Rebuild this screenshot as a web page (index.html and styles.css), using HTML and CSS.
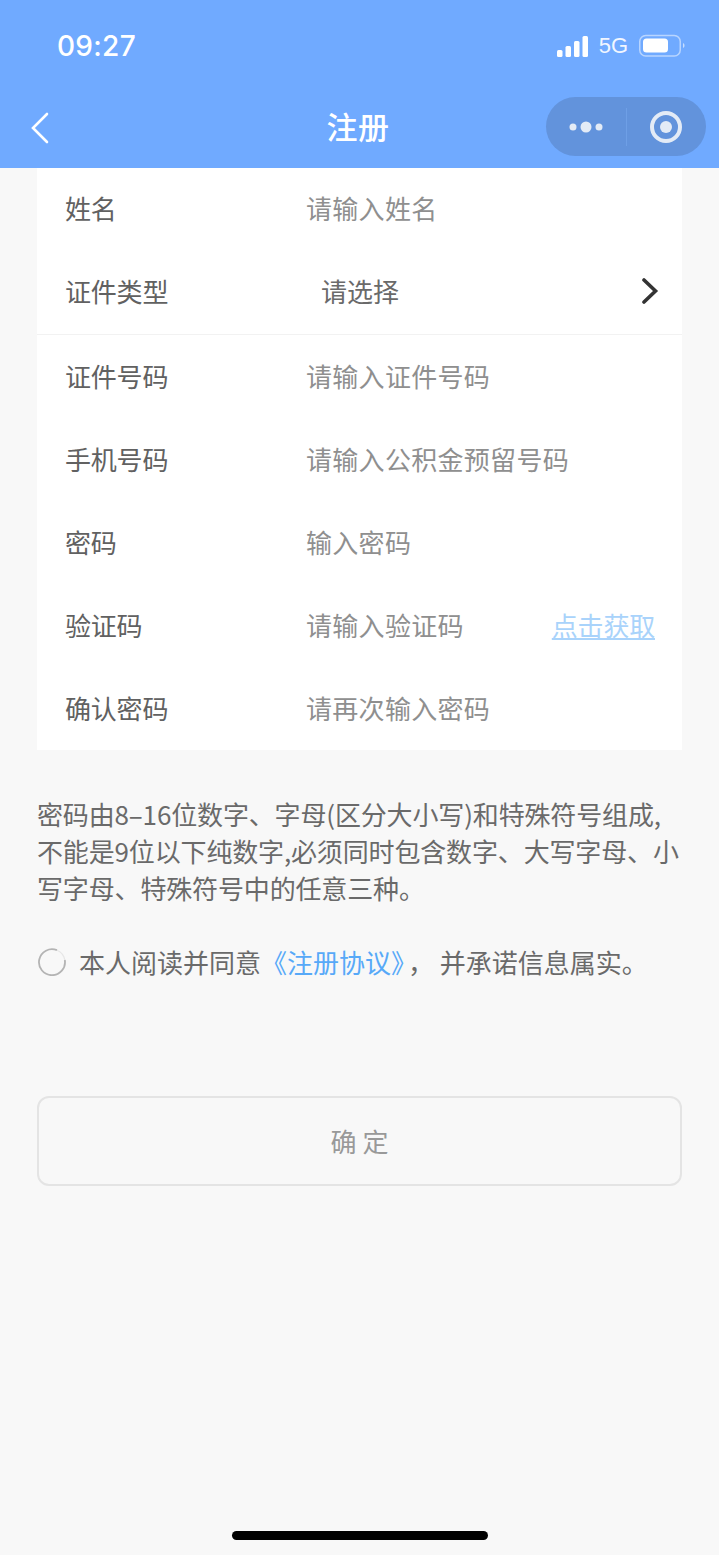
FILE: index.html
```html
<!DOCTYPE html>
<html lang="zh-CN">
<head>
    <meta charset="UTF-8">
    <meta name="viewport" content="width=device-width, initial-scale=1.0">
    <title>注册</title>
    <link rel="stylesheet" href="styles.css">
</head>
<body>
    <header class="top-bar">
        <div class="status-bar">
            <span class="time">09:27</span>
            <div class="status-right">
                <svg class="signal" width="31" height="21" viewBox="0 0 31 21"><rect x="0" y="14" width="5.500" height="7" rx="1.500"/><rect x="8.500" y="10" width="5.500" height="11" rx="1.500"/><rect x="17" y="5" width="5.500" height="16" rx="1.500"/><rect x="25.500" y="0" width="5.500" height="21" rx="1.500"/></svg>
                <span class="net">5G</span>
                <svg class="battery" width="46" height="24" viewBox="0 0 46 24"><rect x="0.750" y="1.500" width="40.500" height="20.500" rx="6" fill="none" stroke="#fff" stroke-opacity="0.5" stroke-width="1.500"/><rect x="4" y="4.500" width="25" height="14" rx="3.500" fill="#fff"/><path d="M44 9c1 .5 1.500 1.500 1.500 2.500s-.5 2-1.500 2.500z" fill="#fff" fill-opacity="0.6"/></svg>
            </div>
        </div>
        <div class="nav-bar">
            <svg class="back" width="20" height="32" viewBox="0 0 20 32"><path d="M17 2 L3 16 L17 30" fill="none" stroke="#fff" stroke-width="2.600" stroke-linecap="round"/></svg>
            <h1 class="nav-title">注册</h1>
            <div class="capsule">
                <div class="capsule-side">
                    <svg width="36" height="16" viewBox="0 0 36 16"><circle cx="5" cy="8" r="3.500"/><circle cx="18" cy="8" r="5.500"/><circle cx="31" cy="8" r="3.500"/></svg>
                </div>
                <div class="capsule-line"></div>
                <div class="capsule-side">
                    <svg width="34" height="34" viewBox="0 0 34 34"><circle cx="17" cy="17" r="14" fill="none" stroke="#e3ebf6" stroke-width="4"/><circle cx="17" cy="17" r="6"/></svg>
                </div>
            </div>
        </div>
    </header>

    <main class="page">
        <section class="form-card">
            <div class="row row-first"><span class="label">姓名</span><span class="hint">请输入姓名</span></div>
            <div class="row row-select">
                <span class="label">证件类型</span><span class="hint hint-select">请选择</span>
                <svg class="arrow" width="18" height="28" viewBox="0 0 18 28"><path d="M2 3 L13.500 14 L2 25" fill="none" stroke="#333" stroke-width="3.600" stroke-linecap="round"/></svg>
            </div>
            <div class="row row-after"><span class="label">证件号码</span><span class="hint">请输入证件号码</span></div>
            <div class="row"><span class="label">手机号码</span><span class="hint">请输入公积金预留号码</span></div>
            <div class="row"><span class="label">密码</span><span class="hint">输入密码</span></div>
            <div class="row"><span class="label">验证码</span><span class="hint">请输入验证码</span><a class="get-code">点击获取</a></div>
            <div class="row"><span class="label">确认密码</span><span class="hint">请再次输入密码</span></div>
        </section>

        <p class="rule">密码由8–16位数字、字母(区分大小写)和特殊符号组成,不能是9位以下纯数字,必须同时包含数字、大写字母、小写字母、特殊符号中的任意三种。</p>

        <div class="agree">
            <svg class="radio" width="30" height="28" viewBox="0 0 30 28"><path d="M20 2.200 A13 13 0 1 0 27.800 12" fill="none" stroke="#b4b4b4" stroke-width="1.800"/><path d="M20 2.200 A13 13 0 0 1 27.800 12" fill="none" stroke="#e6e6e6" stroke-width="1.200"/></svg>
            <span class="agree-text">本人阅读并同意<a class="link">《注册协议》</a>， 并承诺信息属实。</span>
        </div>

        <button class="submit">确 定</button>
    </main>

    <div class="home-bar"></div>
</body>
</html>
```

FILE: styles.css
```css
html, body {
    margin: 0;
    padding: 0;
}
body {
    height: 1555px;
    overflow: hidden;
    background-color: #f8f8f8;
    font-family: "Noto Sans CJK SC", "Liberation Sans", sans-serif;
    display: flex;
    flex-direction: column;
}
.top-bar {
    height: 168px;
    background-color: #70aaff;
    color: #fff;
    flex-shrink: 0;
}
.status-bar {
    height: 92px;
    display: flex;
    justify-content: space-between;
    align-items: center;
    padding: 0 34px 0 57px;
}
.time {
    font-family: Inter, "Liberation Sans", sans-serif;
    font-size: 28px;
    font-weight: 500;
    letter-spacing: 0.3px;
}
.status-right {
    display: flex;
    align-items: center;
    gap: 11px;
}
.signal {
    fill: #fff;
}
.net {
    font-family: "Liberation Sans", sans-serif;
    font-size: 22px;
    opacity: 0.9;
}
.nav-bar {
    height: 76px;
    position: relative;
    display: flex;
    align-items: center;
    justify-content: center;
}
.back {
    position: absolute;
    left: 30px;
    top: 20px;
}
.nav-title {
    margin: 0 3px 10px 0;
    font-size: 31px;
    font-weight: 500;
    letter-spacing: 0.5px;
}
.capsule {
    position: absolute;
    right: 13px;
    top: 5px;
    width: 160px;
    height: 59px;
    border-radius: 30px;
    background-color: #6293dc;
    display: flex;
    align-items: center;
}
.capsule-side {
    flex: 1;
    display: flex;
    justify-content: center;
    align-items: center;
    fill: #e3ebf6;
}
.capsule-line {
    width: 1px;
    height: 38px;
    background-color: #6e9fe6;
}
.page {
    flex: 1;
    padding: 0 37px;
}
.form-card {
    background-color: #fff;
    padding-bottom: 1px;
}
.row {
    height: 83px;
    display: flex;
    align-items: center;
    padding: 0 28px;
    box-sizing: border-box;
}
.row-first {
    height: 82px;
    padding-bottom: 3px;
}
.row-select {
    height: 85px;
    padding-bottom: 3px;
    border-bottom: 1px solid #f2f2f2;
}
.row-after {
    height: 82px;
    padding-bottom: 2px;
}
.label {
    width: 241px;
    flex-shrink: 0;
    font-size: 26px;
    color: #616161;
    letter-spacing: -0.2px;
}
.hint {
    flex: 1;
    font-size: 26px;
    color: #8f8f8f;
    letter-spacing: 0.3px;
}
.hint-select {
    padding-left: 15px;
    color: #6a6a6a;
    letter-spacing: 0;
}
.arrow {
    margin-right: -6px;
}
.get-code {
    font-size: 26px;
    color: #a9d3fb;
    text-decoration: underline;
    letter-spacing: -0.2px;
    margin-right: -1px;
}
.rule {
    margin: 45px -3px 0 0;
    font-size: 26px;
    line-height: 37px;
    color: #6a6a6a;
    letter-spacing: -0.15px;
}
.agree {
    margin-top: 37px;
    display: flex;
    align-items: center;
    gap: 12px;
}
.radio {
    flex-shrink: 0;
}
.agree-text {
    font-size: 26px;
    color: #6a6a6a;
    white-space: nowrap;
}
.link {
    color: #57a9f8;
    margin-right: 4px;
}
.submit {
    display: block;
    width: 100%;
    height: 90px;
    margin-top: 116px;
    padding: 0 0 2px;
    border: 2px solid #e4e4e4;
    border-radius: 12px;
    background-color: #f8f8f8;
    font-family: inherit;
    font-size: 26px;
    color: #999;
}
.home-bar {
    position: absolute;
    left: 232px;
    top: 1531px;
    width: 256px;
    height: 9px;
    border-radius: 5px;
    background-color: #000;
}
```
